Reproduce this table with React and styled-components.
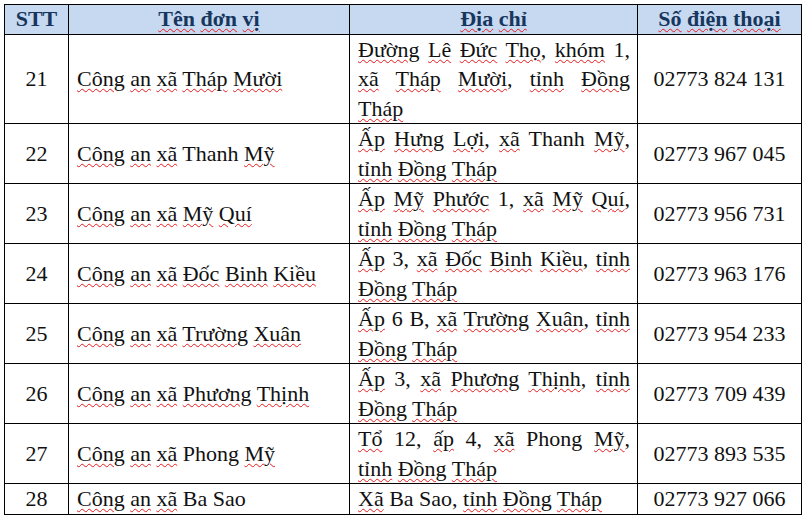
import React from "react";
import styled, { createGlobalStyle } from "styled-components";

const Global = createGlobalStyle`
  html, body { margin: 0; padding: 0; background: #fff; }
  body { width: 806px; height: 516px; overflow: hidden; }
`;

const Page = styled.div`
  padding: 4px 0 0 4px;
  font-family: "Liberation Serif", "Times New Roman", serif;
  font-size: 22px;
  line-height: 29.5px;
  color: #111;
`;

const Table = styled.table`
  border-collapse: collapse;
  table-layout: fixed;
  width: 797px;
`;

const HeadCell = styled.th`
  background: #c6d9f1;
  color: #17365d;
  font-weight: bold;
  text-align: center;
  padding: 0;
  border: 1px solid #000;
  height: 28.5px;
  line-height: 28.5px;
`;

const Cell = styled.td`
  border: 1px solid #000;
  padding: ${(p) => (p.$kind === "addr" ? "0 7px 0 8px" : p.$kind === "name" ? "0 4px 0 8px" : "0")};
  text-align: ${(p) => (p.$kind === "name" || p.$kind === "addr" ? "left" : "center")};
  vertical-align: middle;
`;

const Line = styled.span`
  display: block;
  text-align: ${(p) => (p.$justify ? "justify" : "left")};
  text-align-last: ${(p) => (p.$justify ? "justify" : "left")};
`;

const Squiggle = styled.span`
  text-decoration-line: underline;
  text-decoration-style: wavy;
  text-decoration-color: #e8191c;
  text-decoration-thickness: 1px;
  text-underline-offset: 2px;
`;

const plain = new Set(["Ba", "Sao", "B", "Thanh", "Phong", "STT"]);

function Words({ text }) {
  const parts = text.split(" ");
  return parts.map((w, i) => {
    const m = w.match(/^(.*?)([,.]?)$/);
    const core = m[1];
    const punct = m[2];
    const isPlain = /^\d+$/.test(core) || plain.has(core);
    return (
      <React.Fragment key={i}>
        {i > 0 ? " " : null}
        {isPlain ? core : <Squiggle>{core}</Squiggle>}
        {punct}
      </React.Fragment>
    );
  });
}

const rows = [
  { n: 21, name: "Công an xã Tháp Mười", addr: ["Đường Lê Đức Thọ, khóm 1,", "xã Tháp Mười, tỉnh Đồng", "Tháp"], phone: "02773 824 131" },
  { n: 22, name: "Công an xã Thanh Mỹ", addr: ["Ấp Hưng Lợi, xã Thanh Mỹ,", "tỉnh Đồng Tháp"], phone: "02773 967 045" },
  { n: 23, name: "Công an xã Mỹ Quí", addr: ["Ấp Mỹ Phước 1, xã Mỹ Quí,", "tỉnh Đồng Tháp"], phone: "02773 956 731" },
  { n: 24, name: "Công an xã Đốc Binh Kiều", addr: ["Ấp 3, xã Đốc Binh Kiều, tỉnh", "Đồng Tháp"], phone: "02773 963 176" },
  { n: 25, name: "Công an xã Trường Xuân", addr: ["Ấp 6 B, xã Trường Xuân, tỉnh", "Đồng Tháp"], phone: "02773 954 233" },
  { n: 26, name: "Công an xã Phương Thịnh", addr: ["Ấp 3, xã Phương Thịnh, tỉnh", "Đồng Tháp"], phone: "02773 709 439" },
  { n: 27, name: "Công an xã Phong Mỹ", addr: ["Tổ 12, ấp 4, xã Phong Mỹ,", "tỉnh Đồng Tháp"], phone: "02773 893 535" },
  { n: 28, name: "Công an xã Ba Sao", addr: ["Xã Ba Sao, tỉnh Đồng Tháp"], phone: "02773 927 066" },
];

export default function App() {
  return (
    <Page>
      <Global />
      <Table>
        <colgroup>
          <col style={{ width: 64 }} />
          <col style={{ width: 281 }} />
          <col style={{ width: 288 }} />
          <col style={{ width: 164 }} />
        </colgroup>
        <thead>
          <tr>
            <HeadCell>STT</HeadCell>
            <HeadCell><Words text="Tên đơn vị" /></HeadCell>
            <HeadCell><Words text="Địa chỉ" /></HeadCell>
            <HeadCell><Words text="Số điện thoại" /></HeadCell>
          </tr>
        </thead>
        <tbody>
          {rows.map((r) => (
            <tr key={r.n}>
              <Cell>{r.n}</Cell>
              <Cell $kind="name"><Words text={r.name} /></Cell>
              <Cell $kind="addr">
                {r.addr.map((l, i) => (
                  <Line key={i} $justify={i < r.addr.length - 1}>
                    <Words text={l} />
                  </Line>
                ))}
              </Cell>
              <Cell>{r.phone}</Cell>
            </tr>
          ))}
        </tbody>
      </Table>
    </Page>
  );
}
